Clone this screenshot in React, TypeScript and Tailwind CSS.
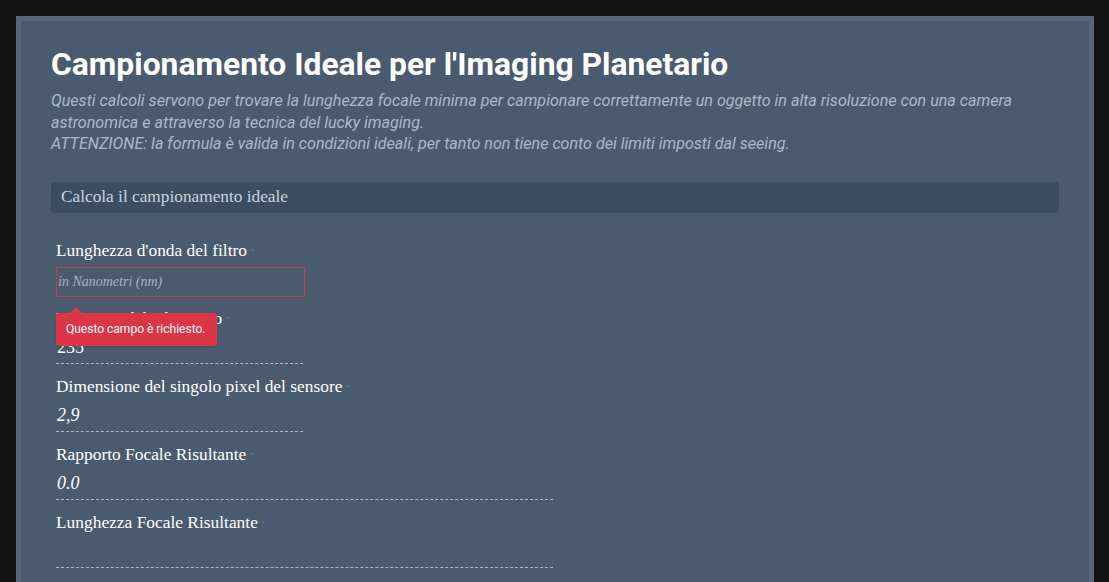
import React from "react";

const serif = "font-['Liberation_Serif',serif]";

function Field({
  label,
  value,
  wide,
  italic = true,
}: {
  label: string;
  value: string;
  wide?: boolean;
  italic?: boolean;
}) {
  return (
    <div className="mb-[11px]">
      <div className={`${serif} text-[17.4px] leading-[22px] text-white`}>
        {label}
        <span className="ml-1 text-[9px] text-white/15 align-top">•</span>
      </div>
      <div
        className={`${serif} ${italic ? "italic" : ""} h-[35px] flex items-center pl-px pt-[4px] text-[18px] text-white border-b border-dashed border-[#a9b7c6] ${
          wide ? "w-[497px]" : "w-[247px]"
        }`}
      >
        {value}
      </div>
    </div>
  );
}

export default function App() {
  return (
    <div className="min-h-[582px] h-[582px] overflow-hidden bg-[#141414] pt-4 pl-4 pr-[15px]">
      <div className="h-[600px] border-[5px] border-[#56677d] bg-[#4a5b70] px-[30px] pt-[24px]">
        {/* Heading */}
        <h1 className="font-['Roboto',sans-serif] font-bold text-[31.8px] leading-[38px] text-white">
          Campionamento Ideale per l'Imaging Planetario
        </h1>
        <p className="mt-[7px] font-['Roboto',sans-serif] italic text-[16.1px] leading-[21.5px] text-[#aab9ca]">
          Questi calcoli servono per trovare la lunghezza focale minima per campionare correttamente un oggetto in alta risoluzione con una camera astronomica e attraverso la tecnica del lucky imaging.
          <br />
          ATTENZIONE: la formula è valida in condizioni ideali, per tanto non tiene conto dei limiti imposti dal seeing.
        </p>

        {/* Section bar */}
        <div className="mt-[27px] h-[31px] rounded-[4px] bg-[#3a4d63] px-[10px] flex items-center">
          <span className={`${serif} text-[17.3px] text-[#c9d3dd]`}>Calcola il campionamento ideale</span>
        </div>

        {/* Form */}
        <div className="pl-[5px] pt-[26px]">
          {/* Field 1 with validation tooltip */}
          <div className="relative mb-[10px]">
            <div className={`${serif} text-[17.4px] leading-[22px] text-white`}>
              Lunghezza d'onda del filtro
              <span className="ml-1 text-[9px] text-white/15 align-top">•</span>
            </div>
            <div className="mt-[6px] h-[30px] w-[249px] border border-[#b8414f] flex items-center">
              <span className={`${serif} italic text-[14px] text-[#a7b4c4] pl-px`}>in Nanometri (nm)</span>
            </div>
            <div className="absolute left-0 top-[74px] z-10">
              <div className="absolute left-[14px] -top-[6px] w-0 h-0 border-l-[6px] border-r-[6px] border-b-[6px] border-l-transparent border-r-transparent border-b-[#dc3545]" />
              <div className="w-[161px] h-[33px] rounded-[3px] bg-[#dc3545] pl-[10px] flex items-center shadow-sm">
                <span className="font-['Roboto',sans-serif] text-[12px] text-white whitespace-nowrap">
                  Questo campo è richiesto.
                </span>
              </div>
            </div>
          </div>

          <Field label="Diametro del telescopio" value="235" italic={false} />
          <Field label="Dimensione del singolo pixel del sensore" value="2,9" />
          <Field label="Rapporto Focale Risultante" value="0.0" wide />
          <Field label="Lunghezza Focale Risultante" value="" wide />
        </div>
      </div>
    </div>
  );
}
